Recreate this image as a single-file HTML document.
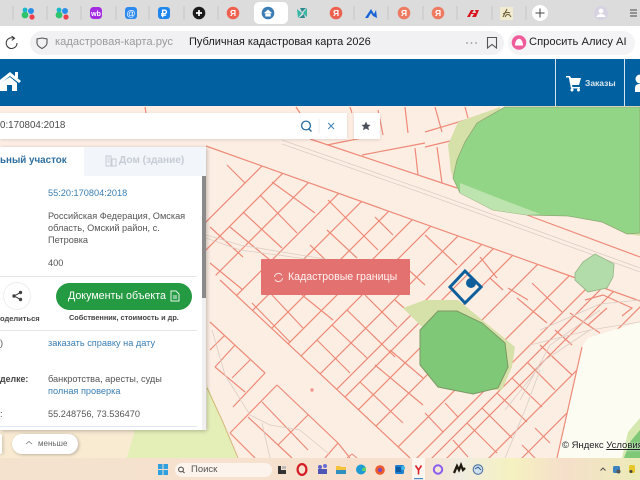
<!DOCTYPE html>
<html lang="ru"><head><meta charset="utf-8"><title>Публичная кадастровая карта 2026</title>
<style>
html,body{margin:0;padding:0;width:640px;height:480px;overflow:hidden;background:#fdeee4;font-family:"Liberation Sans",sans-serif}
.a{position:absolute;white-space:nowrap;line-height:1}
svg{position:absolute;overflow:hidden}
</style></head><body>
<!-- MAP -->
<svg style="left:0;top:0" width="640" height="480" viewBox="0 0 640 480">
<defs><clipPath id="ra"><path d="M206 146L573 277 640 301V322L588 338 582 347 557 458H410L220 280 206 265Z"/></clipPath></defs>
<rect width="640" height="480" fill="#fdeee4"/>
<path d="M582 347L588 338 640 322V458H557Z" fill="#fdfcf3"/>
<path d="M126 460L135 430H207V385L222 420 238 460Z" fill="#e4efb8"/>
<path d="M0 430H135L126 460H0Z" fill="#f9ebd2"/>
<path d="M622 458L628 432 640 418V458Z" fill="#d5e8b0"/><path d="M624 458L630 442 640 430V458Z" fill="#7fc878"/>
<g clip-path="url(#ra)" fill="none" stroke="#ee8a78" stroke-width="1.2">
<path d="M328 100L-32 460M356 100L-4 460M391 100L31 460M432 100L72 460M463 100L103 460M500 100L140 460M532 100L172 460M557 100L197 460M594 100L234 460M626 100L266 460M642 100L282 460M668 100L308 460M702 100L342 460M745 100L385 460M775 100L415 460M790 100L430 460M805 100L445 460M847 100L487 460M880 100L520 460"/>
<path d="M227 165L245 183M260 195L297 233M272 182L315 213M243 212L282 248M230 227L282 270M328 200L378 250M375 217L393 235M327 230L357 258M310 245L333 267M210 227L243 257M210 263L243 290M272 295L303 328M302 295L333 320M252 303L290 342M332 325L367 358M347 310L395 357M365 295L397 327M317 340L350 373M360 382L403 423M390 350L423 378M375 365L423 405M345 397L383 433M517 298L547 323M532 283L562 312M570 313L600 333M555 330L572 345M540 345L572 375M527 362L555 390M512 378L542 407M497 393L527 422M482 408L512 438M467 423L497 453M445 403L458 417M425 413L443 432M453 440L468 457M535 428L550 443M522 445L535 458M425 235L457 265M480 257L497 278M490 278L503 290M508 288L528 300M400 262L425 285M395 300L420 322"/>
</g>
<g fill="none" stroke="#ee8a78" stroke-width="1.2">
<path d="M206 146L573 277M573 277L640 301M310 139L457 188M527 215L640 257M220 280L410 458"/>
<path d="M327 145L377 135M362 155L425 143M425 132L492 112M425 147L467 137M378 110L383 135M405 107L408 133M415 148L418 175M435 107L442 132M437 147L442 183M465 107L468 118M296 107L300 113M145 107L146 113M350 107L352 113"/>
<path d="M210 322L265 373M265 373L233 407M235 345L215 367M225 335L210 350M250 360L232 378M215 367L245 392M277 385L338 443M277 385L230 433M262 402L308 450M308 415L278 445M338 443L325 458M248 417L292 458M230 433L255 458M338 443L350 458"/>
<path d="M582 347L557 458M585 300L603 295 632 308 622 316M607 308L588 325"/>
</g>
<path d="M207 388L222 420 238 458" fill="none" stroke="#d4b97a" stroke-width="1"/>
<path d="M347 458L352 454 357 458" fill="none" stroke="#ee8a78"/>
<g fill="none" stroke="#dccdc4" stroke-width=".8">
<path d="M282 140L425 190 640 268M282 144L425 194 640 272M206 235L240 245 300 255 350 263M206 238L240 250 300 258 340 268"/>
<path d="M212 330L225 375 250 415 270 425 300 430 330 455M262 423L270 458M540 330L600 304 640 300M530 345L590 330 640 322M520 400L550 345 600 310M505 410L545 360 590 330M505 458L525 410 540 370"/>
</g>
<!-- green top -->
<path d="M500 107L458 122 448 145 451 172 460 193 490 205 500 150Z" fill="#d6e0a9"/>
<path d="M560 214L602 222 627 234 640 236V230Z" fill="#d6e0a9"/>
<path d="M505 107L477 123 465 142 457 160 453 178 460 193 493 210 527 215 568 216 602 222 627 234 640 233V107Z" fill="#93d587" stroke="#8fa873" stroke-width=".8"/>
<path d="M460 183L493 196 540 214 527 215 493 210 460 193Z" fill="#bde3ae"/>
<path d="M575 273L583 262 595 254 614 264 613 277 607 288 588 292 575 280Z" fill="#b2dcaa" stroke="#9ab98a" stroke-width=".9"/>
<!-- green bottom -->
<path d="M403 308L425 300 458 300 515 347 512 367 502 390 480 390 440 330 425 330 420 325Z" fill="#d6e0a9"/>
<path d="M420 330L438 311 457 311 482 323 505 343 508 367 498 388 473 394 438 387 420 365Z" fill="#7fc878" stroke="#7c9863" stroke-width="1"/>
<!-- marker -->
<path d="M465 271L481 287 465 303 450 287Z" fill="none" stroke="#0f5e9c" stroke-width="3"/>
<circle cx="471" cy="283" r="5" fill="#0f5e9c"/>
<circle cx="312" cy="390" r="1.7" fill="#eb9a88"/>
</svg>
<div class="a" style="left:562px;top:441px;font-size:9.5px;color:#222;text-shadow:0 0 2px #fff;">© Яндекс <span style="text-decoration:underline">Условия</span></div>

<!-- TAB BAR -->
<div class="a" style="left:0;top:0;width:640px;height:26px;background:#dcdcdc"></div>
<div class="a" style="left:254px;top:2px;width:34px;height:22px;background:#fff;border-radius:5px"></div>
<svg style="left:0;top:0" width="640" height="26" viewBox="0 0 640 26">
<path d="M13 6V20M47 6V20M81 6V20M116 6V20M149 6V20M184 6V20M218 6V20M354 6V20M388 6V20M423 6V20M457 6V20M492 6V20M526 6V20" stroke="#c6c6c6"/>
<g><circle cx="25" cy="15" r="3.4" fill="#2fc46a"/><circle cx="31" cy="11" r="3" fill="#2b8fe8"/><circle cx="25" cy="10" r="2.4" fill="#18b7c9"/><circle cx="32" cy="17" r="2.6" fill="#ee3f4d"/></g>
<g><circle cx="59" cy="15" r="3.4" fill="#2fc46a"/><circle cx="65" cy="11" r="3" fill="#2b8fe8"/><circle cx="59" cy="10" r="2.4" fill="#18b7c9"/><circle cx="66" cy="17" r="2.6" fill="#ee3f4d"/></g>
<rect x="90" y="7" width="12" height="12" rx="3.5" fill="#a32be0"/><text x="96" y="16" font-size="7" font-weight="bold" fill="#fff" text-anchor="middle" font-family="Liberation Sans">wb</text>
<rect x="125" y="7" width="12" height="12" rx="3" fill="#2d89ee"/><text x="131" y="16.5" font-size="9" fill="#fff" text-anchor="middle" font-family="Liberation Sans">@</text>
<rect x="158" y="7" width="12" height="12" rx="3" fill="#1f86ee"/><text x="164" y="17" font-size="10" font-weight="bold" fill="#fff" text-anchor="middle" font-family="Liberation Sans">₽</text>
<circle cx="199" cy="13" r="6.3" fill="#1b1b1b"/><path d="M199 10V16M196 13H202" stroke="#fff" stroke-width="1.7"/>
<g font-family="Liberation Sans" font-size="8.5" font-weight="bold" fill="#fff" text-anchor="middle">
<circle cx="233" cy="13" r="6.3" fill="#ee6150"/><text x="233" y="16">Я</text>
<circle cx="336" cy="13" r="6.3" fill="#ee6150"/><text x="336" y="16">Я</text>
<circle cx="404" cy="13" r="6.3" fill="#ee7a62"/><text x="404" y="16">Я</text>
<circle cx="438" cy="13" r="6.3" fill="#ee7a62"/><text x="438" y="16">Я</text>
</g>
<circle cx="268" cy="13" r="6.3" fill="#3a7db5"/><path d="M263.8 13.2L268 9.5 272.2 13.2M265.3 13V16.5H270.7V13" fill="#fff"/>
<path d="M297 9L302 13 298 18ZM307 8L303 13 307 17Z" fill="#35b8a5"/><path d="M300 8H306L302 12ZM299 18L304 14 305 18Z" fill="#2f8a90"/>
<path d="M365 18L371 9 374 14 376 10 377 18 373 16 371 13 368 18Z" fill="#1664d8"/>
<path d="M467 17L471 10H474L472 13H476L475 10H479L476 17H472L474 14H471L470 17Z" fill="#d9141c"/>
<rect x="500" y="7" width="13" height="13" fill="#f1ebd2"/><path d="M503 17L507 9M505 17C507 13 509 14 511 17M503 14C506 12 508 12 510 13" stroke="#6b5a30" fill="none" stroke-width="1"/>
<circle cx="540" cy="13" r="8" fill="#fff"/><path d="M540 8.5V17.5M535.5 13H544.5" stroke="#444" stroke-width="1"/>
<circle cx="601" cy="13" r="7" fill="#d6d2e2"/><circle cx="601" cy="11" r="2.4" fill="#fff"/><path d="M596.5 17C597 13 605 13 605.5 17Z" fill="#fff"/>
<path d="M630 10H637M630 13H637M630 16H637" stroke="#666" stroke-width="1.2"/>
</svg>

<!-- ADDRESS BAR -->
<div class="a" style="left:0;top:26px;width:640px;height:33px;background:#fff"></div>
<div class="a" style="left:30px;top:31px;width:474px;height:24px;background:#f1f1f3;border-radius:12px"></div>
<div class="a" style="left:508px;top:31px;width:127px;height:24px;background:#f4f3f5;border-radius:12px"></div>
<svg style="left:0;top:26px" width="640" height="33" viewBox="0 26 640 33">
<path d="M14.2 38.4A5.4 5.4 0 1 0 17 43" fill="none" stroke="#333" stroke-width="1"/><path d="M11.6 36L14.6 38.3 11.8 40.4" fill="none" stroke="#333" stroke-width="1"/>
<path d="M42 38L47 39 47 43C47 46 44 47.5 42 48.5 40 47.5 37 46 37 43V39Z" fill="none" stroke="#555" stroke-width="1.1"/>
<circle cx="467" cy="43" r=".9" fill="#999"/><circle cx="471.5" cy="43" r=".9" fill="#999"/><circle cx="476" cy="43" r=".9" fill="#999"/>
<path d="M487.5 37.5H496.5V48L492 44.5 487.5 48Z" fill="none" stroke="#555" stroke-width="1.1"/>
<circle cx="519" cy="42.5" r="7.3" fill="#ee5c9c"/><path d="M515 45.5C515 41.5 517 38.8 519 38.8 521 38.8 523 41.5 523 45.5Z" fill="#fff"/>
</svg>
<div class="a" style="left:55px;top:37px;font-size:11.2px;color:#9a9a9a">кадастровая-карта.рус</div>
<div class="a" style="left:189px;top:37px;font-size:11px;color:#1a1a1a">Публичная кадастровая карта 2026</div>
<div class="a" style="left:529px;top:37px;font-size:11.2px;color:#222">Спросить Алису AI</div>

<!-- HEADER -->
<div class="a" style="left:0;top:59px;width:640px;height:47px;background:#01609f"></div>
<div class="a" style="left:555px;top:59px;width:1px;height:47px;background:#d5e4ef"></div>
<div class="a" style="left:624px;top:59px;width:1px;height:47px;background:#d5e4ef"></div>
<svg style="left:0;top:59px" width="640" height="47" viewBox="0 59 640 47">
<path d="M-4 83L10 72 21 81 19 83 10 76 -2 85Z" fill="#fff"/><path d="M0 83L10 77 17 83V91H12V85H7V91H0Z" fill="#fff"/><rect x="15" y="72" width="3" height="6" fill="#fff"/>
<path d="M566 76H570L571 78H581L579 85H572L572.5 87H580V88.5H571L568.8 77.5H566Z" fill="#fff"/><circle cx="572" cy="90" r="1.5" fill="#fff"/><circle cx="578.5" cy="90" r="1.5" fill="#fff"/>
<circle cx="640" cy="79" r="4.5" fill="#fff"/><path d="M635 92V88C635 85 637 84 640 84V92Z" fill="#fff"/>
</svg>
<div class="a" style="left:585px;top:79px;font-size:8.5px;color:#dbe8f2;font-weight:bold">Заказы</div>

<!-- SEARCH -->
<div class="a" style="left:0;top:113px;width:347px;height:26px;background:#fff;box-shadow:0 1px 3px rgba(0,0,0,.12)"></div>
<div class="a" style="left:354px;top:113px;width:26px;height:26px;background:#fff;box-shadow:0 1px 3px rgba(0,0,0,.12)"></div>
<div class="a" style="left:0;top:121px;font-size:9.8px;color:#4a4a4a">0:170804:2018</div>
<svg style="left:295px;top:113px" width="90" height="26" viewBox="295 113 90 26">
<circle cx="306" cy="125.5" r="4.4" fill="none" stroke="#2c6d9e" stroke-width="1.3"/><path d="M309 129L311.5 131.5" stroke="#2c6d9e" stroke-width="1.4"/>
<path d="M319 119V133" stroke="#e8edf1"/>
<path d="M328.3 123L334 129M334 123L328.3 129" stroke="#3b7fb0"/>
<path d="M366 121.5L367.4 124.6 370.6 124.9 368.2 127 369 130.2 366 128.5 363 130.2 363.8 127 361.4 124.9 364.6 124.6Z" fill="#4a4f5c"/>
</svg>

<!-- PANEL -->
<div class="a" style="left:0;top:147px;width:206px;height:283px;background:#fff;box-shadow:1px 1px 4px rgba(0,0,0,.25)"></div>
<div class="a" style="left:84px;top:147px;width:122px;height:29px;background:#f2f5f9"></div>
<div class="a" style="left:0;top:156px;font-size:9.8px;color:#2e6f9f;font-weight:bold">ьный участок</div>
<svg style="left:105px;top:155px" width="12" height="12" viewBox="0 0 12 12"><path d="M1 1H6V11H1ZM7 4H11V11H7Z" fill="none" stroke="#c5ccd4"/><path d="M2.5 3H4.5M2.5 5H4.5M2.5 7H4.5" stroke="#c5ccd4"/></svg>
<div class="a" style="left:119px;top:156px;font-size:10.1px;color:#c5ccd4;font-weight:bold">Дом (здание)</div>
<div class="a" style="left:202px;top:176px;width:4px;height:254px;background:#f0f0f0"></div>
<div class="a" style="left:202px;top:176px;width:4px;height:122px;background:#8a8a8a"></div>
<div class="a" style="left:48px;top:189px;font-size:9.2px;color:#3a7fb5">55:20:170804:2018</div>
<div class="a" style="left:48px;top:212px;font-size:9.2px;color:#555">Российская Федерация, Омская</div>
<div class="a" style="left:48px;top:224px;font-size:9.2px;color:#555">область, Омский район, с.</div>
<div class="a" style="left:48px;top:236px;font-size:9.2px;color:#555">Петровка</div>
<div class="a" style="left:48px;top:259px;font-size:9.2px;color:#555">400</div>
<div class="a" style="left:0;top:276px;width:197px;height:1px;background:#e4e7ea"></div>
<div class="a" style="left:3px;top:282px;width:28px;height:28px;border-radius:50%;background:#fff;border:1px solid #eee;box-sizing:border-box"></div>
<svg style="left:11px;top:290px" width="12" height="12" viewBox="0 0 12 12"><path d="M9.5 2.5L3 6 9.5 9.5" fill="none" stroke="#444"/><circle cx="9.5" cy="2.5" r="1.7" fill="#444"/><circle cx="3" cy="6" r="1.7" fill="#444"/><circle cx="9.5" cy="9.5" r="1.7" fill="#444"/></svg>
<div class="a" style="left:56px;top:283px;width:136px;height:27px;background:#249a42;border-radius:14px"></div>
<div class="a" style="left:68px;top:291px;font-size:10.7px;color:#fff">Документы объекта</div>
<svg style="left:170px;top:290px" width="10" height="12" viewBox="0 0 10 12"><path d="M1 1H6L9 4V11H1ZM3 6H7M3 8H7" fill="none" stroke="#e6f4e9"/></svg>
<div class="a" style="left:0;top:315px;font-size:7.5px;color:#444;font-weight:bold">оделиться</div>
<div class="a" style="left:69px;top:314px;font-size:7.35px;color:#444;font-weight:bold">Собственник, стоимость и др.</div>
<div class="a" style="left:0;top:330px;width:197px;height:1px;background:#e4e7ea"></div>
<div class="a" style="left:48px;top:339px;font-size:9.2px;color:#3a7fb5">заказать справку на дату</div>
<div class="a" style="left:0;top:339px;font-size:9.2px;color:#555">)</div>
<div class="a" style="left:0;top:375px;font-size:8.8px;color:#444;font-weight:bold">делке:</div>
<div class="a" style="left:48px;top:375px;font-size:9.2px;color:#555">банкротства, аресты, суды</div>
<div class="a" style="left:48px;top:387px;font-size:9.2px;color:#3a7fb5">полная проверка</div>
<div class="a" style="left:0;top:410px;font-size:9.2px;color:#444">:</div>
<div class="a" style="left:48px;top:410px;font-size:9.2px;color:#555">55.248756, 73.536470</div>
<div class="a" style="left:0;top:426px;width:197px;height:1px;background:#e4e7f0"></div>
<div class="a" style="left:0;top:434px;width:2px;height:20px;background:#fff;border-radius:0 10px 10px 0;box-shadow:1px 1px 3px rgba(0,0,0,.25)"></div>
<div class="a" style="left:12px;top:434px;width:66px;height:20px;background:#fff;border-radius:10px;box-shadow:1px 1px 3px rgba(0,0,0,.25)"></div>
<svg style="left:25px;top:440px" width="8" height="6" viewBox="0 0 8 6"><path d="M1 4L4 1.5 7 4" fill="none" stroke="#777" stroke-width=".8"/></svg>
<div class="a" style="left:38px;top:440px;font-size:8px;color:#666">меньше</div>

<!-- KADASTR BUTTON -->
<div class="a" style="left:261px;top:259px;width:149px;height:36px;background:#e2716f;border-radius:1px"></div>
<svg style="left:273px;top:272px" width="11" height="11" viewBox="0 0 11 11"><path d="M1.5 5A4 4 0 0 1 9 3.5M9.5 6A4 4 0 0 1 2 7.5" fill="none" stroke="#fbe3e2"/></svg>
<div class="a" style="left:288px;top:272px;font-size:10.6px;color:#fff3f2">Кадастровые границы</div>

<!-- TASKBAR -->
<div class="a" style="left:0;top:458px;width:640px;height:22px;background:linear-gradient(90deg,#f4e2cf 0,#f7e0cd 65%,#f0ece0 72%,#f5f1c0 80%,#f5dfca 88%,#ecebb8 100%)"></div>
<div class="a" style="left:175px;top:463px;width:97px;height:14px;background:#fbf3ec;border-radius:7px"></div>
<div class="a" style="left:191px;top:465px;font-size:9.5px;color:#555">Поиск</div>
<div class="a" style="left:412px;top:458px;width:13px;height:22px;background:rgba(255,255,255,.7)"></div>
<svg style="left:0;top:458px" width="640" height="22" viewBox="0 458 640 22">
<path d="M158 464H162.5V469H158ZM163.5 464H168V469H163.5ZM158 470H162.5V475H158ZM163.5 470H168V475H163.5Z" fill="#2f9fe0"/>
<circle cx="181" cy="469.5" r="2.4" fill="none" stroke="#444"/><path d="M183 471.5L184.5 473" stroke="#444"/>
<path d="M278 466H281V470H286V474H278Z" fill="#333"/><rect x="282" y="466" width="4" height="3" fill="#bbb"/>
<ellipse cx="302" cy="469.5" rx="4.4" ry="5.4" fill="none" stroke="#d41c26" stroke-width="2.2"/>
<circle cx="320" cy="467" r="2" fill="#5d63c8"/><circle cx="325" cy="466" r="2" fill="#6a6fd6"/><rect x="318" y="469" width="9" height="5" fill="#4e55b4"/>
<path d="M336 466H340L341 467H346V474H336Z" fill="#f5c33a"/><rect x="336" y="470" width="10" height="4" fill="#2f8fc0"/>
<circle cx="361" cy="469.5" r="5" fill="#1f9ad4"/><path d="M362 469.5A2.5 2.5 0 0 1 366 468V471H362Z" fill="#5ed16a"/>
<circle cx="380" cy="470" r="4.8" fill="#ea5a2b"/><circle cx="380" cy="470" r="2" fill="#7c46c8"/>
<rect x="395" y="465" width="9" height="9" rx="1.5" fill="#1f7fd0"/><rect x="396" y="467" width="5" height="5" fill="#0d5aa0"/><circle cx="403" cy="468" r="2" fill="#3fb6e8"/>
<path d="M415.5 465.5L418.5 470 421.5 465.5M418.5 470V474.5" fill="none" stroke="#d9252a" stroke-width="1.6"/><rect x="414" y="478" width="9" height="1.2" fill="#4a8ac2"/>
<circle cx="438" cy="469.5" r="4.2" fill="none" stroke="#8a5cf0" stroke-width="2"/>
<path d="M454 473L457 466 459 470 461 465 463 470 465 468" fill="none" stroke="#1f1a10" stroke-width="2.3"/>
<circle cx="478" cy="469.5" r="4.8" fill="#cfe0ef" stroke="#4a6f9a"/><path d="M475 469L478 467 481 470" fill="none" stroke="#2f5d8e"/>
<path d="M600.5 470.5L603 468 605.5 470.5" fill="none" stroke="#444" stroke-width=".9"/>
<rect x="613" y="466" width="7" height="7" rx="1.5" fill="#3c84c0"/><circle cx="618.5" cy="471.5" r="2" fill="#555"/>
<rect x="629" y="465" width="6" height="8" rx="1.5" fill="#e8c72a"/><circle cx="631" cy="471.5" r="1.5" fill="#444"/>
</svg>
</body></html>
